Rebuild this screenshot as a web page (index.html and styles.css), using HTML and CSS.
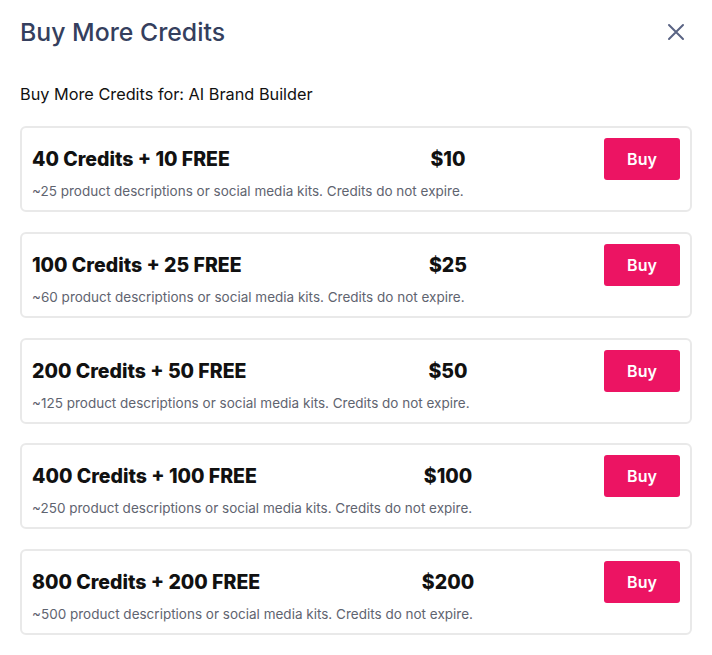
FILE: index.html
```html
<!DOCTYPE html>
<html>
<head>
<meta charset="utf-8">
<link rel="stylesheet" href="styles.css">
</head>
<body>
<div class="modal">
  <div class="header">
    <h1 class="title">Buy More Credits</h1>
    <button class="close" aria-label="Close">
      <svg width="18" height="18" viewBox="0 0 18 18"><path d="M2 2L16 16M16 2L2 16" stroke="#5a6484" stroke-width="2" stroke-linecap="round"/></svg>
    </button>
  </div>
  <p class="subtitle">Buy More Credits for: AI Brand Builder</p>
  <div class="list">
    <div class="card">
      <div class="info">
        <div class="row"><span class="name">40 Credits + 10 FREE</span><span class="price">$10</span></div>
        <div class="desc">~25 product descriptions or social media kits. Credits do not expire.</div>
      </div>
      <button class="buy">Buy</button>
    </div>
    <div class="card">
      <div class="info">
        <div class="row"><span class="name">100 Credits + 25 FREE</span><span class="price">$25</span></div>
        <div class="desc">~60 product descriptions or social media kits. Credits do not expire.</div>
      </div>
      <button class="buy">Buy</button>
    </div>
    <div class="card">
      <div class="info">
        <div class="row"><span class="name">200 Credits + 50 FREE</span><span class="price">$50</span></div>
        <div class="desc">~125 product descriptions or social media kits. Credits do not expire.</div>
      </div>
      <button class="buy">Buy</button>
    </div>
    <div class="card">
      <div class="info">
        <div class="row"><span class="name">400 Credits + 100 FREE</span><span class="price">$100</span></div>
        <div class="desc">~250 product descriptions or social media kits. Credits do not expire.</div>
      </div>
      <button class="buy">Buy</button>
    </div>
    <div class="card">
      <div class="info">
        <div class="row"><span class="name">800 Credits + 200 FREE</span><span class="price">$200</span></div>
        <div class="desc">~500 product descriptions or social media kits. Credits do not expire.</div>
      </div>
      <button class="buy">Buy</button>
    </div>
  </div>
</div>
</body>
</html>
```

FILE: styles.css
```css
* { box-sizing: border-box; }
html, body { margin: 0; padding: 0; background: #fff; }
body { font-family: Inter, "Noto Sans", sans-serif; color: #111; }
.modal { width: 712px; padding: 16px 20px 0 20px; }
.header { display: flex; justify-content: space-between; align-items: center; height: 32px; }
.title { margin: 0; font-size: 24.8px; font-weight: 500; color: #353f5e; letter-spacing: 0; }
.close { border: 0; background: none; padding: 0; width: 18px; height: 18px; margin-right: 7px; display: flex; cursor: pointer; }
.subtitle { margin: 36px 0 0 0; font-size: 16.3px; line-height: 20px; color: #111; }
.list { display: flex; flex-direction: column; gap: 19.75px; margin-top: 22px; }
.card { display: flex; align-items: flex-start; justify-content: space-between; border: 2px solid #e9e9e9; border-radius: 6px; padding: 10px 10px 0 10px; height: 86px; }
.info { display: flex; flex-direction: column; }
.row { display: flex; align-items: center; height: 42px; }
.name { width: 376px; font-size: 19.5px; font-weight: 800; color: #111; letter-spacing: 0; }
.price { width: 80px; text-align: center; font-size: 19.5px; font-weight: 800; color: #111; }
.desc { font-size: 13.5px; color: #5f6470; margin-top: 3px; }
.buy { width: 76px; height: 42px; border: 0; border-radius: 3px; background: #ec1463; color: #fff; font-family: inherit; font-size: 16px; font-weight: 600; padding: 0; }
```
